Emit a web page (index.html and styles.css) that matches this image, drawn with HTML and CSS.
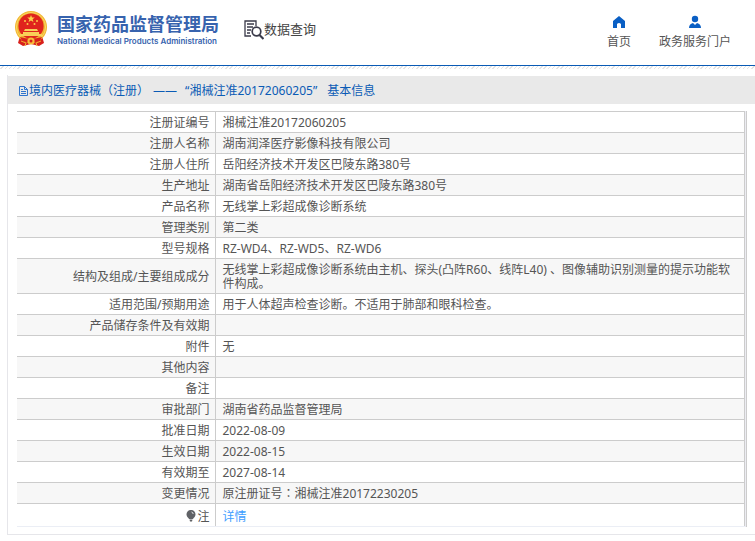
FILE: index.html
```
<!DOCTYPE html>
<html lang="zh-CN">
<head>
<meta charset="utf-8">
<title>国家药品监督管理局 数据查询</title>
<link rel="stylesheet" href="styles.css">
</head>
<body>
<header class="site-header">
  <div class="brand">
    <svg class="emblem" viewBox="0 0 34 38" aria-hidden="true">
      <path d="M6 26 4 33l5 3 8-2 8 2 5-3-2-7z" fill="#d8201c"/>
      <circle cx="17" cy="17" r="16" fill="#f2b632"/>
      <circle cx="17" cy="17" r="14.6" fill="none" stroke="#f9d765" stroke-width="1"/>
      <circle cx="17" cy="16" r="12.6" fill="#e0241d"/>
      <path d="m17 5 1 2.6h2.800l-2.200 1.700.8 2.700-2.400-1.600-2.400 1.600.8-2.700-2.200-1.700H16z" fill="#fbd24a"/>
      <g fill="#fbc94a"><circle cx="11" cy="11" r="1"/><circle cx="23" cy="11" r="1"/><circle cx="13.500" cy="14" r="1"/><circle cx="20.500" cy="14" r="1"/></g>
      <path d="M11 19h12l1 2H10zM9 22h16v2h3v2H6v-2h3z" fill="#f9cf58"/>
      <path d="M6 27q11 3 22 0l-2 4q-9 3-18 0z" fill="#d8201c"/>
      <circle cx="17" cy="31" r="3.600" fill="#f6be3a"/>
      <circle cx="17" cy="31" r="1.500" fill="#d8201c"/>
      <path d="m7 31 5 2-1 3M27 31l-5 2 1 3" fill="none" stroke="#f2b632"/>
    </svg>
    <div class="brand-text">
      <span class="brand-cn">国家药品监督管理局</span>
      <span class="brand-en">National Medical Products Administration</span>
    </div>
  </div>
  <div class="section-name">
    <svg class="query-icon" viewBox="0 0 20 20" aria-hidden="true">
      <g fill="none" stroke="#3a3a4a" stroke-width="1.300">
        <path d="M12 6V1H1v15h6M3 4h7M3 7h6M3 10h4M3 13h3"/>
        <circle cx="12.500" cy="11.500" r="4.300" stroke-width="1.700"/>
        <path d="m15.500 15 4 4" stroke-width="2.200"/>
      </g>
    </svg>
    <span>数据查询</span>
  </div>
  <nav class="main-nav">
    <a href="#home">
      <svg class="nav-icon" viewBox="0 0 14 14" aria-hidden="true"><path d="M7 1 1 6v7h4V9q2-2 4 0v4h4V6z" fill="#0a5fc4"/></svg>
      <span>首页</span>
    </a>
    <a href="#portal">
      <svg class="nav-icon" viewBox="0 0 14 14" aria-hidden="true"><circle cx="7" cy="4" r="3.200" fill="#0a5fc4"/><path d="M1 13q0-4 4-5l2 2 2-2q4 1 4 5z" fill="#0a5fc4"/></svg>
      <span>政务服务门户</span>
    </a>
  </nav>
</header>
<main class="panel">
  <h1 class="panel-title">
    <svg class="doc-icon" viewBox="0 0 11 12" aria-hidden="true"><path d="M1.500 1.500h5l3 3v6h-8zM6.500 1.500v3h3M3 4.500h2M3 6.500h5M3 8.500h5" fill="none" stroke="#2f74cc"/></svg>
    <span>境内医疗器械<span class="centered-mark" lang="zh-TW">（</span>注册<span class="centered-mark" lang="zh-TW">）</span></span>
    <span class="title-dash">——</span>
    <span class="title-number">“湘械注准20172060205”</span>
    <span>基本信息</span>
  </h1>
  <div class="table-wrap">
    <table class="info">
      <tbody>
        <tr><th scope="row">注册证编号</th><td>湘械注准20172060205</td></tr>
        <tr><th scope="row">注册人名称</th><td>湖南润泽医疗影像科技有限公司</td></tr>
        <tr><th scope="row">注册人住所</th><td>岳阳经济技术开发区巴陵东路380号</td></tr>
        <tr><th scope="row">生产地址</th><td>湖南省岳阳经济技术开发区巴陵东路380号</td></tr>
        <tr><th scope="row">产品名称</th><td>无线掌上彩超成像诊断系统</td></tr>
        <tr><th scope="row">管理类别</th><td>第二类</td></tr>
        <tr><th scope="row">型号规格</th><td>RZ-WD4、RZ-WD5、RZ-WD6</td></tr>
        <tr><th scope="row">结构及组成/主要组成成分</th><td>无线掌上彩超成像诊断系统由主机、探头(凸阵R60、线阵L40) 、图像辅助识别测量的提示功能软件构成。</td></tr>
        <tr><th scope="row">适用范围/预期用途</th><td>用于人体超声检查诊断。不适用于肺部和眼科检查。</td></tr>
        <tr><th scope="row">产品储存条件及有效期</th><td></td></tr>
        <tr><th scope="row">附件</th><td>无</td></tr>
        <tr><th scope="row">其他内容</th><td></td></tr>
        <tr><th scope="row">备注</th><td></td></tr>
        <tr><th scope="row">审批部门</th><td>湖南省药品监督管理局</td></tr>
        <tr><th scope="row">批准日期</th><td>2022-08-09</td></tr>
        <tr><th scope="row">生效日期</th><td>2022-08-15</td></tr>
        <tr><th scope="row">有效期至</th><td>2027-08-14</td></tr>
        <tr><th scope="row">变更情况</th><td>原注册证号<span class="centered-mark" lang="zh-TW">：</span>湘械注准20172230205</td></tr>
        <tr class="note-row"><th scope="row"><svg class="bulb-icon" viewBox="0 0 10 12" aria-hidden="true"><path d="M5 0a4.300 4.300 0 0 1 4.500 4.500C9.500 7 7.500 7.500 7 9H3C2.500 7.500.5 7 .5 4.500A4.300 4.300 0 0 1 5 0zM3.500 9.500h3l-.5 2H4z" fill="#606266"/><path d="M5.500 2q1.500.3 1.700 2" fill="none" stroke="#fff" stroke-width=".8"/></svg>注</th><td><a href="#detail">详情</a></td></tr>
      </tbody>
    </table>
  </div>
</main>
</body>
</html>
```
FILE: styles.css
```
* { box-sizing: border-box; }

body {
  margin: 0;
  background: #fff;
  color: #555;
  font: 12px/14px "Noto Sans", "Noto Sans CJK SC", sans-serif;
}

a { text-decoration: none; }

.site-header {
  display: flex;
  align-items: flex-start;
  height: 66px;
  padding: 10px 24px 0 14px;
  border-bottom: 1px solid #0a5bb5;
}

.brand { display: flex; gap: 9px; }

.emblem { width: 34px; height: 38px; }

.brand-text {
  display: flex;
  flex-direction: column;
  width: 161px;
  padding-top: 4px;
  color: #3763ae;
  white-space: nowrap;
}

.brand-cn {
  font-size: 18px;
  line-height: 20px;
  font-weight: 700;
}

.brand-en {
  font: 600 8px/15px Inter, sans-serif;
}

.section-name {
  display: flex;
  align-items: flex-start;
  margin-left: 26px;
  padding-top: 10px;
  color: #444;
  font-size: 13px;
  line-height: 18px;
  white-space: nowrap;
}

.query-icon { width: 20px; height: 20px; }

.main-nav {
  display: flex;
  gap: 28px;
  margin-left: auto;
  padding-top: 5px;
}

.main-nav a {
  display: flex;
  flex-direction: column;
  align-items: center;
  gap: 6px;
  color: #555;
  white-space: nowrap;
}

.nav-icon { width: 14px; height: 14px; }

/* Diagonal hatching just under the header rule */
.panel::before {
  content: "";
  display: block;
  height: 3px;
  margin: 0 0 7px -8px;
  background: repeating-linear-gradient(135deg, #fff 0 2px, #e4e4e4 2px 3px);
}

.panel {
  margin-left: 7px;
  padding-bottom: 7px;
  border-bottom: 1px solid #e6e6ea;
  border-left: 1px solid transparent;
  border-image: linear-gradient(transparent 10px, #e6e6ea 10px) 1;
  border-width: 0 0 1px 1px;
}

.panel-title {
  display: flex;
  align-items: center;
  height: 28px;
  margin: 0;
  padding: 1px 0 0 10px;
  background: #e9e9e9;
  color: #0a5bb5;
  font-size: 12px;
  line-height: 14px;
  font-weight: 400;
  white-space: nowrap;
}

.doc-icon { width: 11px; height: 12px; }

.centered-mark {
  font-family: "Noto Sans CJK TC", sans-serif;
  line-height: 10px;
}

.title-dash { margin-left: 4px; }

.title-number { margin: 0 10px 0 8px; }

.table-wrap {
  margin: 7px 8px 0 9px;
  padding-right: 1px;
  border-right: 1px solid #ccc;
  background: #ececf2;
}

.info {
  width: 100%;
  border-collapse: collapse;
  background: #fff;
}

.info th,
.info td {
  height: 21px;
  padding: 4px 7px 2px;
  border: 1px solid #ccc;
  text-align: left;
  font-weight: 400;
}

.info th {
  width: 198px;
  padding-right: 5px;
  border-left: 0;
  text-align: right;
}

.info tr:nth-child(even) { background: #f7f7f7; }

.info .note-row th,
.info .note-row td {
  height: 23px;
  padding-top: 5px;
  border-bottom-color: #ebeef5;
}

.info a { color: #409eff; }

.bulb-icon {
  width: 10px;
  height: 12px;
  margin-right: 1px;
  vertical-align: -1px;
}
```
